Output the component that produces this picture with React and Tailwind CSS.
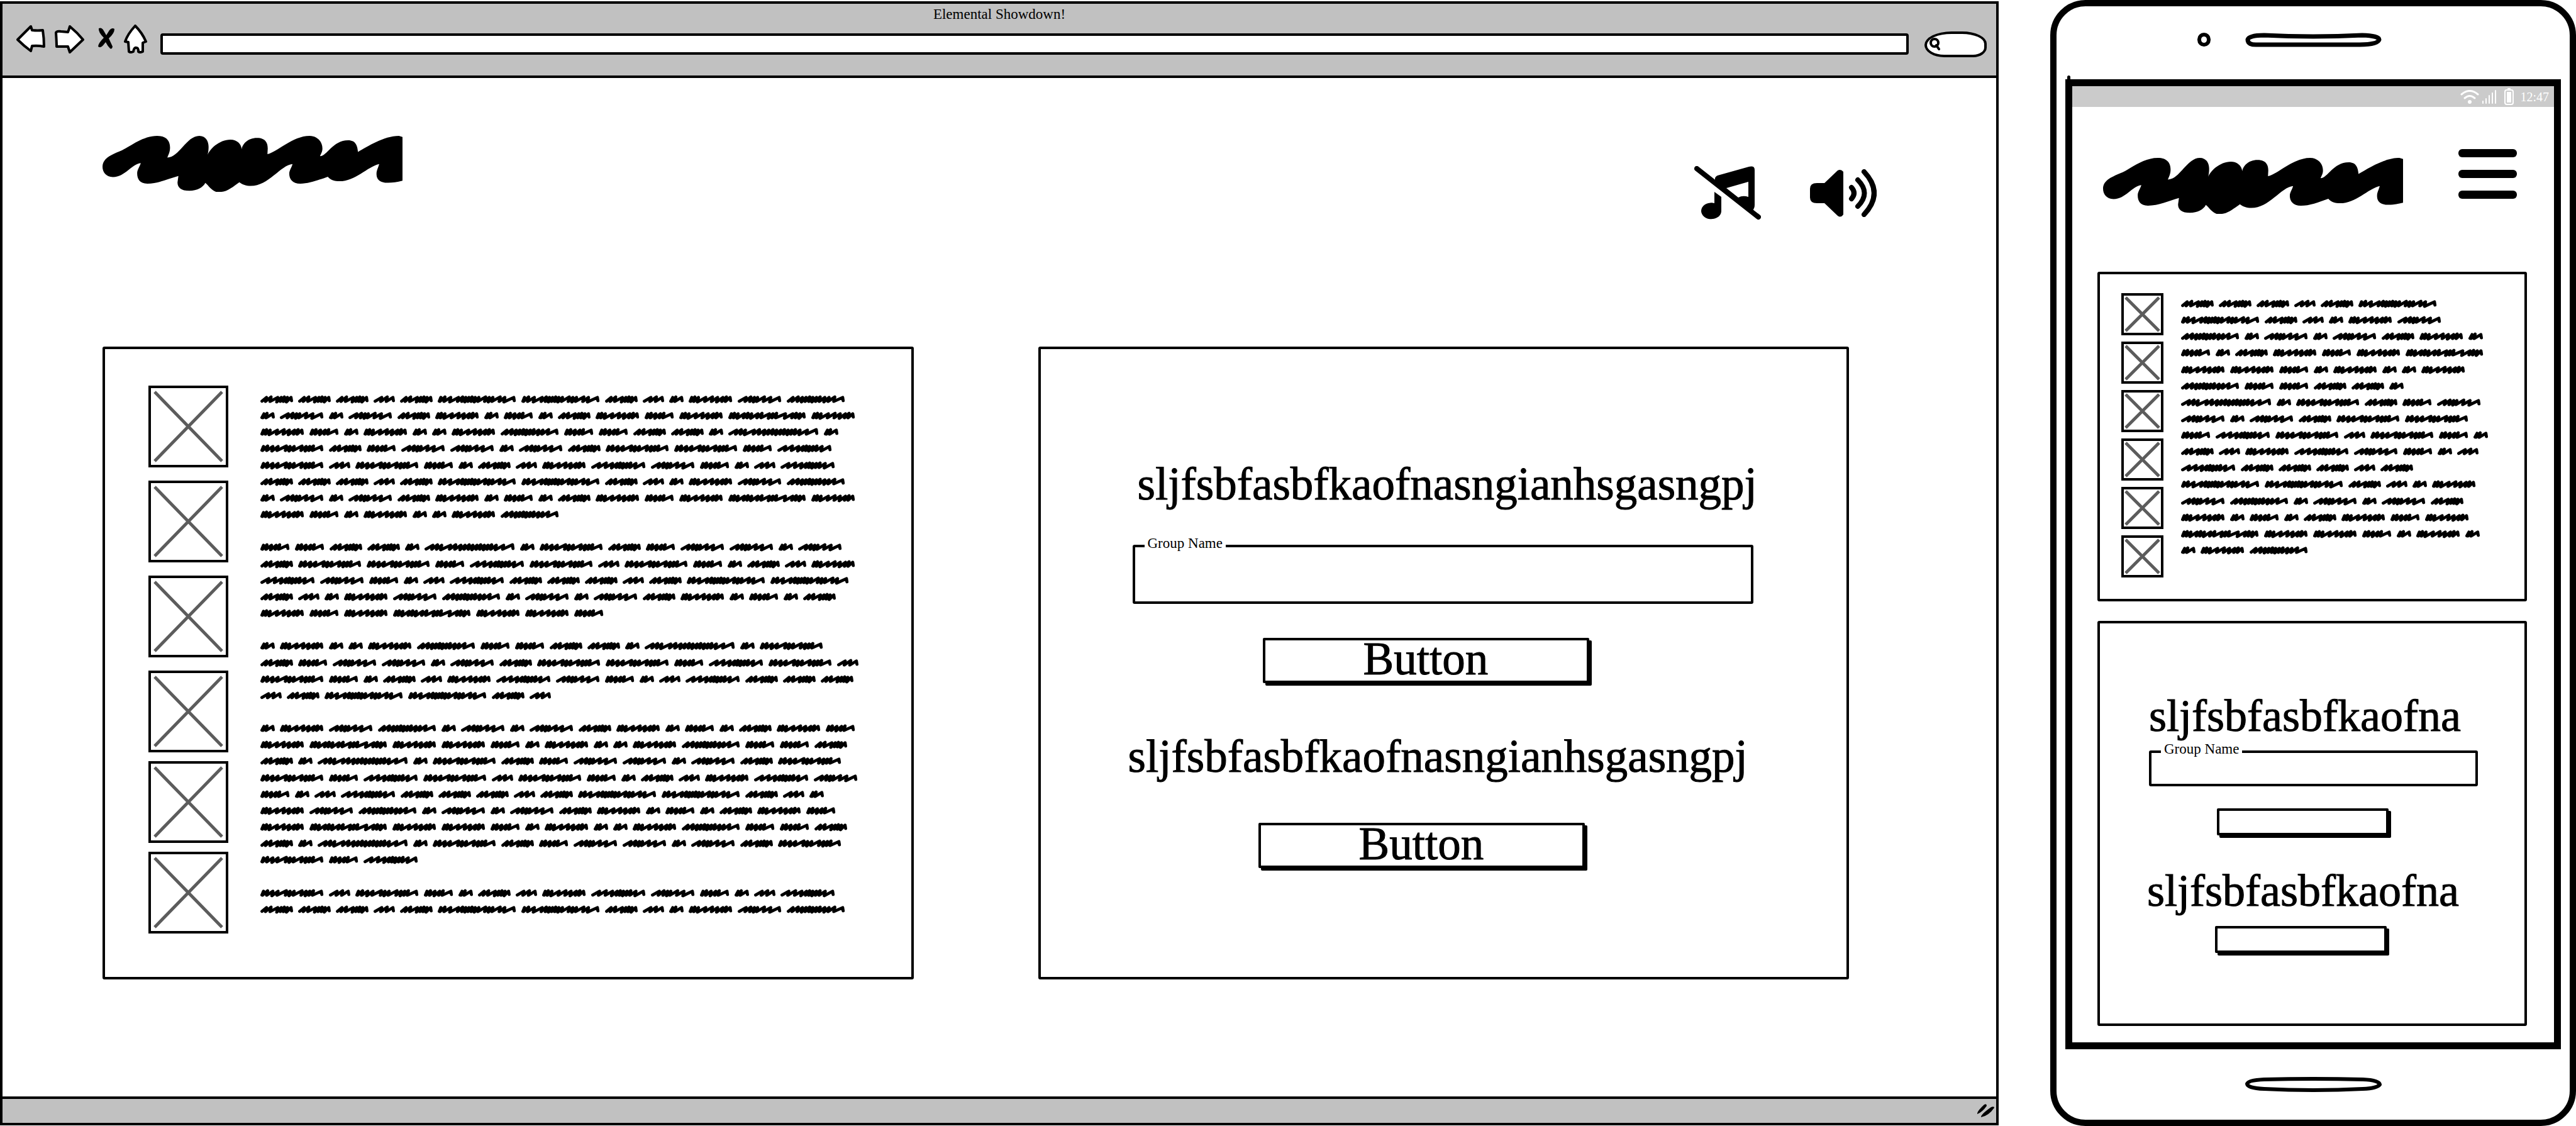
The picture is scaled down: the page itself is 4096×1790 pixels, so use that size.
import React from "react";

const SERIF = "font-['Liberation_Serif',serif]";
const DISPLAY = "font-['Liberation_Serif',serif] [-webkit-text-stroke:1px_#000]";

/* Scribbled words: width class, drawing width and the x of every pen peak. */
const WORDS = {
  a: { cls: "w-[52px]", w: 64, peaks: [12, 21, 34, 41, 47, 53, 60] },
  b: { cls: "w-[34px]", w: 42, peaks: [16, 27, 38] },
  c: { cls: "w-[125px]", w: 151, peaks: [6, 14, 25, 40, 48, 54, 60, 66, 72, 79, 92, 99, 106, 120, 129, 146] },
  d: { cls: "w-[23px]", w: 28, peaks: [7, 13, 24] },
  e: { cls: "w-[70px]", w: 84, peaks: [16, 25, 32, 38, 51, 63, 79] },
  f: { cls: "w-[70px]", w: 85, peaks: [6, 12, 19, 33, 46, 56, 66, 73, 80] },
  g: { cls: "w-[47px]", w: 58, peaks: [6, 13, 22, 31, 38, 53] },
  h: { cls: "w-[93px]", w: 112, peaks: [12, 22, 30, 37, 44, 50, 57, 64, 73, 81, 92, 107] },
  i: { cls: "w-[101px]", w: 122, peaks: [6, 14, 24, 34, 50, 57, 65, 80, 88, 95, 102, 117] },
  j: { cls: "w-[144px]", w: 174, peaks: [16, 25, 33, 50, 60, 70, 78, 86, 93, 101, 108, 115, 122, 129, 138, 152, 169] },
  k: { cls: "w-[87px]", w: 105, peaks: [16, 29, 41, 50, 56, 62, 69, 76, 86, 100] },
  l: { cls: "w-[124px]", w: 150, peaks: [6, 12, 19, 31, 38, 45, 57, 65, 79, 86, 93, 110, 124, 131, 138, 145] },
};

function wordPath(peaks) {
  let d = "M3 11";
  peaks.forEach((p, n) => {
    d += ` L${p} ${n % 3 === 1 ? 2.5 : 3.5}`;
    d += n < peaks.length - 1 ? ` L${p - 2} ${n % 3 === 2 ? 12.5 : 11.5}` : ` L${p + 1} 10`;
  });
  return d;
}

function Word({ kind }) {
  const { cls, w, peaks } = WORDS[kind];
  return (
    <svg className={`h-3 shrink-0 overflow-visible ${cls}`} viewBox={`0 0 ${w} 15`} preserveAspectRatio="none" aria-hidden="true">
      <path d={wordPath(peaks)} fill="none" stroke="#000" strokeWidth="6" strokeLinecap="round" strokeLinejoin="round" />
    </svg>
  );
}

function ScribbleText({ lines, className }) {
  return (
    <div className={`flex flex-col justify-between ${className}`}>
      {lines.map((line, n) => (
        <div key={n} className="flex h-3 gap-2">
          {line.split("").map((kind, m) => (
            <Word key={m} kind={kind} />
          ))}
        </div>
      ))}
    </div>
  );
}

const DESKTOP_LINES = [
  "aaabaccabdfeh",
  "dedeafdgdafgflf",
  "fgdfddfhggaadjd",
  "iageedeaiigk",
  "ibigdabfkegdbk",
  "aaabaccabdfeh",
  "dedeafdgdafgflf",
  "fgdfddfh",
  "",
  "ggaadjdiageede",
  "aiigkibigdabf",
  "kegdbkaaabacc",
  "abdfehdedeafdgda",
  "fgflffg",
  "",
  "dfddfhggaadjdi",
  "ageedeaiigkib",
  "igdabfkegdbkaaa",
  "baccab",
  "",
  "dfehdedeafdgdafg",
  "flffgdfddfhgga",
  "adjdiageedeai",
  "igkibigdabfke",
  "gdbkaaabaccabd",
  "fehdedeafdgdafg",
  "flffgdfddfhgga",
  "adjdiageedeai",
  "igk",
  "",
  "ibigdabfkegdbk",
  "aaabaccabdfeh",
];

const PHONE_LINES = [
  "aaabac",
  "cabdfe",
  "hdedeafd",
  "gdafgfl",
  "ffgdfddf",
  "hggaad",
  "jdiage",
  "edeaii",
  "gkibigd",
  "abfkegdb",
  "kaaaba",
  "ccabdf",
  "ehdedea",
  "fdgdafgf",
  "lffgdfd",
  "dfh",
];

function Logo({ className = "" }) {
  return (
    <svg className={`h-[89px] w-[477px] shrink-0 ${className}`} viewBox="344 783 1004 321" preserveAspectRatio="none" role="img" aria-label="Logo">
      <path d="M344 960C344 910 375 890 410 865C440 840 480 783 527 783C560 783 570 815 570 850C570 875 565 890 561 907C600 907 625 783 668 783C690 783 699 815 699 845C699 870 697 885 694 901C700 860 735 805 772 805C795 805 808 830 810 860C812 830 830 795 861 795C890 795 897 825 897 855L896 888C930 875 980 783 1037 783C1062 783 1080 815 1080 855C1080 875 1075 885 1072 899C1095 899 1115 808 1166 808C1192 808 1197 840 1199 875C1230 845 1285 783 1336 783L1348 789V1040C1330 1048 1315 1052 1300 1052C1270 1052 1261 1030 1261 1000C1261 980 1267 965 1270 944C1230 960 1190 1043 1137 1043C1120 1043 1107 1035 1098 1017C1065 1037 1035 1057 1006 1057C980 1057 969 1030 969 1000C969 980 977 965 980 944C940 950 900 1070 840 1070C825 1070 812 1062 802 1049C785 1070 760 1104 742 1104H724C708 1095 700 1070 688 1053C680 1080 660 1098 635 1098C607 1098 595 1080 595 1050L598 1013C565 1028 530 1057 494 1057C468 1057 460 1030 460 998C460 975 469 960 472 939C440 945 420 1019 379 1019C355 1019 344 990 344 960Z" />
    </svg>
  );
}

function ImageBox({ className }) {
  return (
    <div className={`shrink-0 border-4 border-black ${className}`}>
      <svg className="block h-full w-full" role="img" aria-label="Image placeholder">
        <line x1="5%" y1="5%" x2="95%" y2="95%" stroke="#5c5c5c" strokeWidth="5" />
        <line x1="95%" y1="5%" x2="5%" y2="95%" stroke="#5c5c5c" strokeWidth="5" />
      </svg>
    </div>
  );
}

function GroupField({ inputClass }) {
  return (
    <fieldset className="rounded-[3px] border-4 border-black">
      <legend className={`ml-[15px] px-[5px] pb-2 text-[23px] leading-[26px] ${SERIF}`}>Group Name</legend>
      <input type="text" aria-label="Group Name" className={`block w-full bg-transparent px-4 outline-none ${inputClass}`} />
    </fieldset>
  );
}

function SketchButton({ className, children, label }) {
  return (
    <button
      type="button"
      aria-label={label}
      className={`block rounded-[2px] border-4 border-black bg-white shadow-[4px_4px_0_0_#000] ${DISPLAY} ${className}`}
    >
      {children}
    </button>
  );
}

const ICON_STROKE = {
  fill: "#fff",
  stroke: "#000",
  strokeWidth: 4,
  strokeLinejoin: "round",
  strokeLinecap: "round",
};

function BrowserBar() {
  return (
    <header className="border-b-4 border-black bg-[#c1c1c1] pt-[5px] pb-[19px]">
      <h1 className={`text-center text-[23px] leading-6 ${SERIF}`}>Elemental Showdown!</h1>
      <div className="mt-1 flex items-center pr-[15px] pl-[22px]">
        <nav className="flex items-center gap-[14px] pb-4" aria-label="Browser">
          <button type="button" aria-label="Back">
            <svg className="block h-[46px] w-[46px]" viewBox="0 0 46 46">
              <path {...ICON_STROKE} d="M2 24L23 3L25 9Q34 10 42 9Q44 22 44 35Q34 33 25 34L23 42Q12 34 2 24Z" />
            </svg>
          </button>
          <button type="button" aria-label="Forward">
            <svg className="block h-[46px] w-[48px]" viewBox="0 0 48 46">
              <path {...ICON_STROKE} d="M3 13Q4 10 11 11L22 12Q24 7 25 3Q37 13 46 24L25 44L22 35L4 35Q4 28 3 13Z" />
            </svg>
          </button>
          <button type="button" aria-label="Stop">
            <svg className="block h-[46px] w-[34px]" viewBox="0 0 34 46">
              <path d="M9 6Q14 4 17 10L21 17L26 9Q30 4 34 7Q34 14 25 22L31 35Q30 40 27 38Q23 34 20 28L16 33Q12 38 8 35Q8 30 17 21Q8 12 9 6Z" />
            </svg>
          </button>
          <button type="button" aria-label="Home">
            <svg className="block h-[46px] w-[38px]" viewBox="0 0 38 46">
              <path {...ICON_STROKE} d="M19 2Q30 13 36 27L31 29L31 43Q27 45 24 43Q24 37 21 37Q17 36 16 43Q12 45 9 43L8 28L3 27Q7 15 19 2Z" />
            </svg>
          </button>
        </nav>
        <input
          type="text"
          aria-label="Address"
          className={`ml-[21px] h-[34px] min-w-0 flex-1 rounded-[4px] border-4 border-black bg-white px-3 text-[20px] outline-none ${SERIF}`}
        />
        <label className="ml-[25px] flex h-[41px] w-[99px] items-center rounded-[44px_40px_22px_32px/22px_20px_16px_20px] border-4 border-black bg-white pl-1">
          <svg className="h-[20px] w-[17px] shrink-0" viewBox="0 0 17 20" aria-hidden="true">
            <ellipse cx="8" cy="8" rx="6" ry="6" fill="none" stroke="#000" strokeWidth="4" />
            <path d="M11 12L15 18" stroke="#000" strokeWidth="4" strokeLinecap="round" />
          </svg>
          <input type="text" aria-label="Search" className={`min-w-0 flex-1 bg-transparent text-[20px] outline-none ${SERIF}`} />
        </label>
      </div>
    </header>
  );
}

function MusicOffIcon() {
  return (
    <svg className="block h-[86px] w-[106px]" viewBox="0 0 106 86">
      <path fillRule="evenodd" d="M33 26V20Q33 17 37 15L87 1Q96 -1 96 6V62Q96 67 92 72ZM86 25L51 35L70 50Q77 46 86 49Z" />
      <path d="M4 4L102 81" stroke="#000" strokeWidth="8" strokeLinecap="round" />
      <path d="M32 41L43 49V72A16 13 0 1 1 32 59Z" />
    </svg>
  );
}

function SpeakerIcon() {
  return (
    <svg className="block h-[76px] w-[106px]" viewBox="0 0 106 76">
      <path d="M0 31Q0 22 11 22H23L44 2Q49 -1 53 4V72Q49 78 44 74L23 54H11Q0 54 0 45Z" />
      <g fill="none" stroke="#000" strokeWidth="8" strokeLinecap="round">
        <path d="M66 29Q74 38 66 47" />
        <path d="M76 17Q97 38 76 59" />
        <path d="M86 4Q118 38 86 72" />
      </g>
    </svg>
  );
}

function Browser() {
  return (
    <section className="mt-[2px] mb-px flex flex-col border-4 border-black">
      <BrowserBar />
      <main className="flex-1 pb-24">
        <div className="flex items-start justify-between pt-[92px] pr-[190px] pl-[159px]">
          <Logo />
          <div className="mt-12 flex items-center gap-[78px]">
            <button type="button" aria-label="Music off">
              <MusicOffIcon />
            </button>
            <button type="button" aria-label="Sound">
              <SpeakerIcon />
            </button>
          </div>
        </div>
        <div className="mt-[201px] grid grid-cols-2 gap-[198px] pr-[234px] pl-[159px]">
          <section className="flex gap-[51px] rounded-[3px] border-4 border-black pt-[58px] pb-[69px] pl-[69px]">
            <div className="flex flex-col gap-[14px]">
              <div className="flex flex-col gap-[21px]">
                {[0, 1, 2, 3].map((n) => (
                  <ImageBox key={n} className="h-[130px] w-[127px]" />
                ))}
              </div>
              <ImageBox className="h-[130px] w-[127px]" />
              <ImageBox className="h-[130px] w-[127px]" />
            </div>
            <ScribbleText lines={DESKTOP_LINES} className="pt-4 pb-8" />
          </section>
          <section className="rounded-[3px] border-4 border-black pt-[175px]">
            <div className="pr-[148px] pl-[146px]">
              <h2 className={`pl-2 text-[73px] leading-[80px] ${DISPLAY}`}>sljfsbfasbfkaofnasngianhsgasngpj</h2>
              <div className="mt-[41px]">
                <GroupField inputClass="h-[71px] text-[40px]" />
              </div>
              <SketchButton className="mt-[54px] ml-[207px] h-[72px] w-[519px] pb-1 text-[73px] leading-[60px]">Button</SketchButton>
            </div>
            <div className="mt-[77px] pl-[139px]">
              <h2 className={`text-[73px] leading-[80px] ${DISPLAY}`}>sljfsbfasbfkaofnasngianhsgasngpj</h2>
              <SketchButton className="mt-[65px] ml-[207px] h-[72px] w-[519px] pb-1 text-[73px] leading-[60px]">Button</SketchButton>
            </div>
          </section>
        </div>
      </main>
      <footer className="flex h-[42px] items-center justify-end border-t-4 border-black bg-[#c1c1c1] pr-[3px]">
        <svg className="h-[22px] w-[27px]" viewBox="0 0 27 22" aria-hidden="true">
          <path d="M0 16Q-1 12 11 1Q15 -1 15 3Q8 13 0 16Z" />
          <path d="M6 21Q5 17 22 5Q27 3 27 6Q18 19 6 21Z" />
        </svg>
      </footer>
    </section>
  );
}

function StatusBar() {
  return (
    <div className="flex h-[33px] items-center justify-end bg-[#cbcbcb] pr-2 text-white">
      <svg className="h-[22px] w-[30px]" viewBox="0 0 30 22" aria-hidden="true">
        <g fill="none" stroke="#fff" strokeWidth="3" strokeLinecap="round">
          <path d="M2 7Q15 -4 28 7" />
          <path d="M7 13Q15 6 23 13" />
        </g>
        <circle cx="15" cy="19" r="3" fill="#fff" />
      </svg>
      <svg className="ml-[5px] h-[22px] w-[23px]" viewBox="0 0 23 22" aria-hidden="true">
        <path d="M1 18V21M6 14V21M11 9V21M16 5V21M21 1V21" stroke="#fff" strokeWidth="2" strokeLinecap="round" />
      </svg>
      <svg className="ml-3 h-[27px] w-[15px]" viewBox="0 0 15 27" aria-hidden="true">
        <rect x="5" y="0" width="5" height="3" rx="1" fill="#fff" />
        <rect x="1" y="3" width="13" height="23" rx="3" fill="none" stroke="#fff" strokeWidth="2" />
        <rect x="4" y="6" width="7" height="17" fill="#fff" />
      </svg>
      <span className={`ml-[10px] text-[20px] leading-6 ${SERIF}`}>12:47</span>
    </div>
  );
}

function Phone() {
  return (
    <section className="flex flex-col rounded-[56px] border-[10px] border-black">
      <div className="grid h-[116px] grid-cols-[1fr_auto_1fr] items-center pb-[10px]">
        <span className="mr-[55px] h-[22px] w-[21px] justify-self-end rounded-full border-[6px] border-black" />
        <svg className="h-[23px] w-[217px]" viewBox="0 0 217 23" aria-hidden="true">
          <path d="M30 4Q108 8 186 4Q213 5 213 11Q211 19 182 19H20Q4 20 4 11Q6 4 30 4Z" fill="#fff" stroke="#000" strokeWidth="7" />
        </svg>
      </div>
      <div className="relative mx-[14px] flex flex-1 flex-col border-[11px] border-black">
        <span className="absolute -top-[17px] -left-2 h-3 w-[5px] rounded-full bg-black" />
        <StatusBar />
        <div className="flex items-start justify-between pt-[67px] pr-[59px] pl-[49px]">
          <Logo className="mt-[14px]" />
          <button type="button" aria-label="Menu" className="flex w-[93px] flex-col gap-5">
            <span className="h-[13px] w-full rounded-[6px] bg-black" />
            <span className="h-[13px] w-full rounded-[6px] bg-black" />
            <span className="h-[13px] w-full rounded-[6px] bg-black" />
          </button>
        </div>
        <div className="mt-[92px] mr-[43px] ml-[40px] flex flex-1 flex-col gap-[31px] pb-[26px]">
          <section className="flex gap-7 rounded-[3px] border-4 border-black pt-[30px] pb-[34px] pl-[34px]">
            <div className="flex flex-col gap-[10px]">
              {[0, 1, 2, 3, 4, 5].map((n) => (
                <ImageBox key={n} className="h-[67px] w-[67px]" />
              ))}
            </div>
            <ScribbleText lines={PHONE_LINES} className="pt-[11px] pb-[37px]" />
          </section>
          <section className="flex-1 rounded-[3px] border-4 border-black pt-[107px] pb-12">
            <div className="pr-[74px] pl-[78px]">
              <h2 className={`text-[72px] leading-[80px] ${DISPLAY}`}>sljfsbfasbfkaofna</h2>
              <GroupField inputClass="h-[34px] text-[23px]" />
              <SketchButton label="Submit group name" className="mt-[35px] ml-[108px] h-[43px] w-[273px]" />
            </div>
            <div className="mt-12 pl-[75px]">
              <h2 className={`text-[72px] leading-[80px] ${DISPLAY}`}>sljfsbfasbfkaofna</h2>
              <SketchButton label="Continue" className="mt-4 ml-[108px] h-[43px] w-[273px]" />
            </div>
          </section>
        </div>
      </div>
      <div className="flex h-[112px] items-center justify-center">
        <button type="button" aria-label="Phone home">
          <svg className="block h-[24px] w-[217px]" viewBox="0 0 217 24">
            <path d="M30 4Q108 2 187 4Q213 5 214 12Q210 18 187 19Q108 23 30 19Q4 18 3 11Q5 5 30 4Z" fill="#fff" stroke="#000" strokeWidth="6" />
          </svg>
        </button>
      </div>
    </section>
  );
}

export default function App() {
  return (
    <div className="grid min-h-screen grid-cols-[3178fr_836fr] gap-[82px] bg-white text-black">
      <Browser />
      <Phone />
    </div>
  );
}
